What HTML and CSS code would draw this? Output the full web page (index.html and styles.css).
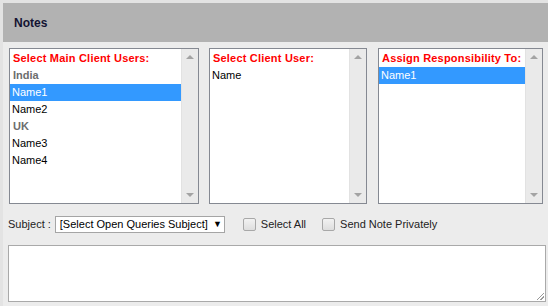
FILE: index.html
```html
<!DOCTYPE html>
<html lang="en">
<head>
    <meta charset="UTF-8">
    <title>Notes</title>
    <link rel="stylesheet" href="styles.css">
</head>
<body>

    <!-- notes panel -->
    <div class="panel">
        <div class="panel-head">Notes</div>

        <div class="lists">
            <div class="listbox list-main">
                <div class="options">
                    <div class="opt-title">Select Main Client Users:</div>
                    <div class="opt-group">India</div>
                    <div class="opt selected">Name1</div>
                    <div class="opt">Name2</div>
                    <div class="opt-group">UK</div>
                    <div class="opt">Name3</div>
                    <div class="opt">Name4</div>
                </div>
                <div class="scroll">
                    <span class="arrow up"></span>
                    <span class="arrow down"></span>
                </div>
            </div>

            <div class="listbox list-client">
                <div class="options">
                    <div class="opt-title">Select Client User:</div>
                    <div class="opt">Name</div>
                </div>
                <div class="scroll">
                    <span class="arrow up"></span>
                    <span class="arrow down"></span>
                </div>
            </div>

            <div class="listbox list-assign">
                <div class="options">
                    <div class="opt-title">Assign Responsibility To:</div>
                    <div class="opt selected">Name1</div>
                </div>
                <div class="scroll">
                    <span class="arrow up"></span>
                    <span class="arrow down"></span>
                </div>
            </div>
        </div>

        <div class="subject-row">
            <span class="label">Subject :</span>
            <div class="dropdown">
                <span>[Select Open Queries Subject]</span>
                <span class="caret">&#9660;</span>
            </div>
            <label class="check"><span class="box"></span>Select All</label>
            <label class="check"><span class="box"></span>Send Note Privately</label>
        </div>

        <div class="note-box">
            <span class="grip"></span>
        </div>
    </div>

</body>
</html>
```

FILE: styles.css
```css
/* base */
body {
    margin: 0;
    padding: 3px 0 0 3px;
    background-color: #e3e3e3;
    font-family: 'Liberation Sans', Arial, sans-serif;
    font-size: 11px;
    color: #000;
}

.panel {
    background-color: #ececec;
    height: 303px;
}

/* header */
.panel-head {
    background-color: #b2b2b2;
    height: 39px;
    line-height: 41px;
    padding-left: 11px;
    font-size: 12px;
    font-weight: bold;
    color: #141432;
}

/* list boxes */
.lists {
    display: flex;
    padding: 6px 0 0 6px;
}

.listbox {
    display: flex;
    height: 154px;
    border: 1px solid #858992;
    background-color: #fff;
}

.list-main { width: 188px; }
.list-client { width: 156px; margin-left: 10px; }
.list-assign { width: 163px; margin-left: 11px; }

.options {
    flex: 1;
    padding-top: 1px;
}

.opt-title,
.opt-group,
.opt {
    height: 17px;
    line-height: 17px;
    padding-left: 3px;
    white-space: nowrap;
}

.opt-title {
    color: #ff0000;
    font-weight: bold;
    letter-spacing: 0.2px;
}

.opt-group {
    color: #6d6d6d;
    font-weight: bold;
}

.opt {
    padding-left: 2px;
}

.opt.selected {
    background-color: #3399ff;
    color: #fff;
}

.scroll {
    width: 16px;
    background-color: #eaeaea;
    border-left: 1px solid #e2e2e2;
    display: flex;
    flex-direction: column;
    justify-content: space-between;
    align-items: center;
    padding: 6px 0 6px;
}

.arrow {
    width: 0;
    height: 0;
    border-left: 4px solid transparent;
    border-right: 4px solid transparent;
}

.arrow.up { border-bottom: 4px solid #a3a3a3; }
.arrow.down { border-top: 4px solid #a3a3a3; }

/* subject row */
.subject-row {
    display: flex;
    align-items: center;
    padding: 11px 0 0 5px;
    height: 18px;
}

.label {
    margin-right: 4px;
    color: #222;
}

.dropdown {
    width: 162px;
    height: 15px;
    line-height: 15px;
    border: 1px solid #a5a5a5;
    background-color: #fff;
    padding: 0 2px 0 4px;
    display: flex;
    justify-content: space-between;
}

.caret {
    font-size: 9px;
}

.check {
    display: flex;
    align-items: center;
    margin-left: 18px;
    color: #222;
}

.check .box {
    width: 11px;
    height: 11px;
    border: 1px solid #a8a8a8;
    border-radius: 2px;
    background: linear-gradient(#f2f2f2, #dedede);
    margin-right: 5px;
}

.check + .check {
    margin-left: 16px;
}

/* note textarea */
.note-box {
    position: relative;
    margin: 12px 0 0 5px;
    width: 536px;
    height: 55px;
    border: 1px solid #a9a9a9;
    background-color: #fff;
}

.grip {
    position: absolute;
    right: 1px;
    bottom: 1px;
    width: 7px;
    height: 7px;
    background: linear-gradient(135deg, transparent 45%, #999 45%, #999 55%, transparent 55%, transparent 70%, #999 70%, #999 80%, transparent 80%);
}
```
